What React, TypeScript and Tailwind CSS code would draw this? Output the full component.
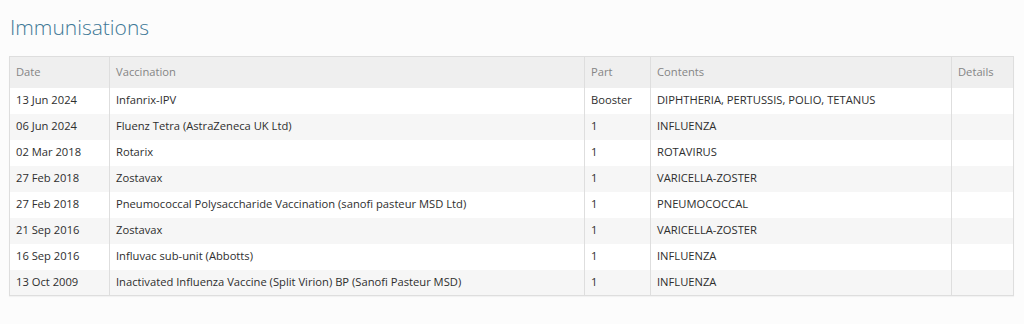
const rows = [
  ["13 Jun 2024", "Infanrix-IPV", "Booster", "DIPHTHERIA, PERTUSSIS, POLIO, TETANUS"],
  ["06 Jun 2024", "Fluenz Tetra (AstraZeneca UK Ltd)", "1", "INFLUENZA"],
  ["02 Mar 2018", "Rotarix", "1", "ROTAVIRUS"],
  ["27 Feb 2018", "Zostavax", "1", "VARICELLA-ZOSTER"],
  ["27 Feb 2018", "Pneumococcal Polysaccharide Vaccination (sanofi pasteur MSD Ltd)", "1", "PNEUMOCOCCAL"],
  ["21 Sep 2016", "Zostavax", "1", "VARICELLA-ZOSTER"],
  ["16 Sep 2016", "Influvac sub-unit (Abbotts)", "1", "INFLUENZA"],
  ["13 Oct 2009", "Inactivated Influenza Vaccine (Split Virion) BP (Sanofi Pasteur MSD)", "1", "INFLUENZA"],
];

export default function App() {
  return (
    <div className="w-[1024px] h-[324px] bg-[#fcfcfc] pl-[9px] pr-[11px] pt-[13px] font-['Open_Sans',sans-serif]">
      <h1 className="text-[21px] font-light text-[#3e7896] leading-[28px] pl-[1px] mb-[15px]">
        Immunisations
      </h1>
      <table className="w-[1004px] table-fixed border-collapse border border-[#dedede] text-[11.2px] shadow-[0_1px_1px_rgba(0,0,0,0.04)]">
        <colgroup>
          <col className="w-[100px]" />
          <col className="w-[475px]" />
          <col className="w-[66px]" />
          <col className="w-[301px]" />
          <col className="w-[62px]" />
        </colgroup>
        <thead>
          <tr className="bg-[#efefef] h-[31px] text-[#858585] text-left">
            <th className="font-normal pl-[6px] border-r border-[#dedede]">Date</th>
            <th className="font-normal pl-[6px] border-r border-[#dedede]">Vaccination</th>
            <th className="font-normal pl-[6px] border-r border-[#dedede]">Part</th>
            <th className="font-normal pl-[6px] border-r border-[#dedede]">Contents</th>
            <th className="font-normal pl-[6px]">Details</th>
          </tr>
        </thead>
        <tbody>
          {rows.map((r, i) => (
            <tr
              key={i}
              className={`h-[26px] text-[#2e2e2e] ${i % 2 ? "bg-[#f6f6f6]" : "bg-white"}`}
            >
              <td className="pl-[6px] border-r border-[#dedede]">{r[0]}</td>
              <td className="pl-[6px] border-r border-[#dedede]">{r[1]}</td>
              <td className="pl-[6px] border-r border-[#dedede]">{r[2]}</td>
              <td className="pl-[6px] border-r border-[#dedede]">{r[3]}</td>
              <td></td>
            </tr>
          ))}
        </tbody>
      </table>
    </div>
  );
}
